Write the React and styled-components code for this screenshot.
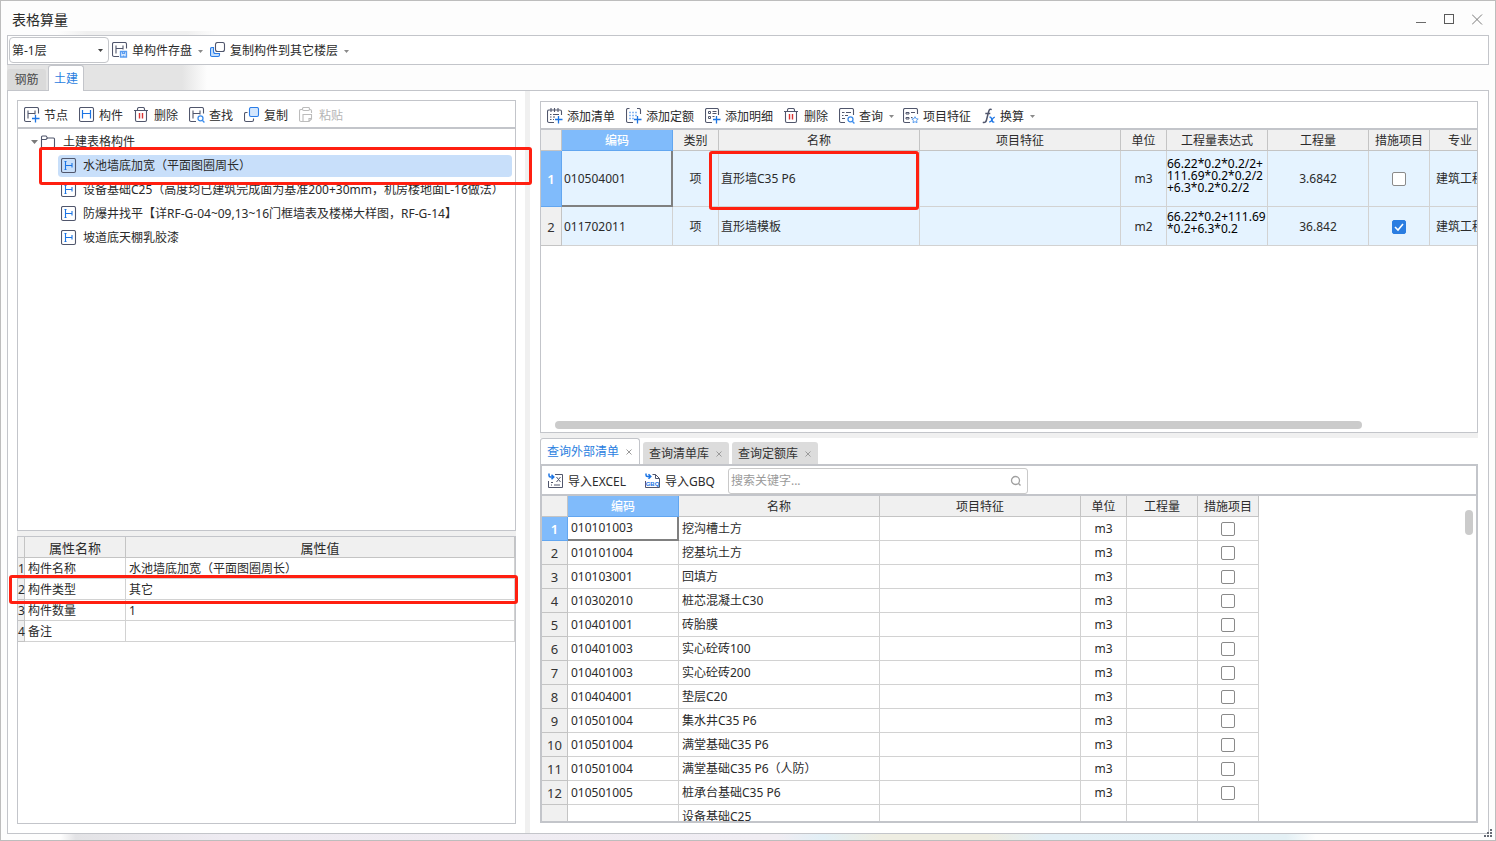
import React from "react";
import styled, { createGlobalStyle, css } from "styled-components";

const line = "#c3c5ca";
const cellLine = "#d2d2d2";
const headLine = "#c4c4c4";
const ink = "#50566c";
const blue = "#1b74e4";

const Global = createGlobalStyle`
  *, *::before, *::after { box-sizing: border-box; }
  body { margin: 0; }
  body, button, input, select, table {
    font-family: "Noto Sans", "Noto Sans CJK SC", sans-serif;
    font-size: 12px;
    line-height: 16px;
    color: #2b2b2b;
  }
  button, input, select { margin: 0; }
`;

/* ---------- window frame ---------- */

const Window = styled.div`
  height: 100vh;
  min-height: 600px;
  display: flex;
  flex-direction: column;
  padding: 0 6px 6px;
  border: 1px solid #bdbdbd;
  overflow: hidden;
  position: relative;
  background:
    linear-gradient(90deg, #fdfdfd 4%, #e3e3e6 5%, #eeebf2 15%, #f0edf3 52%, #e2eff6 55%, #eeede2 59%, #eeede2 66%, #e2eff6 70%, #e4f0f5 86%, #fdfdfd 88%) bottom / 100% 6px no-repeat,
    #fdfdfd;
`;

const TitleBar = styled.header`
  flex: 0 0 34px;
  display: flex;
  justify-content: space-between;
  align-items: center;
  padding: 4px 1px 0 5px;
  background: linear-gradient(90deg, transparent 50px, #f0f0f0 80px, #f0f0f0 180px, transparent 210px) bottom / 100% 4px no-repeat;
`;

const Title = styled.h1`
  margin: 0;
  font-size: 14px;
  line-height: 20px;
  font-weight: 400;
`;

const WindowButtons = styled.div`
  display: flex;
  gap: 12px;
`;

const WindowButton = styled.button`
  width: 16px;
  height: 16px;
  padding: 0;
  border: 0;
  background: none;
  svg { display: block; }
`;

const Bar = styled.div`
  display: flex;
  align-items: center;
  background: #fff;
`;

const MainBar = styled(Bar)`
  flex: 0 0 30px;
  gap: 9px;
  padding: 1px;
  border: 1px solid ${line};
`;

const SelectWrap = styled.label`
  position: relative;
  width: 100px;
  margin-right: -6px;
  svg { position: absolute; right: 6px; top: 12px; }
`;

const FloorSelect = styled.select`
  display: block;
  width: 100%;
  height: 26px;
  padding: 2px 2px 0;
  appearance: none;
  border: 1px solid #c4c6ca;
  border-radius: 4px;
  background: #fff;
`;

const ToolButton = styled.button`
  display: flex;
  align-items: center;
  gap: 4px;
  padding: 0;
  border: 0;
  background: none;
  white-space: nowrap;
  color: ${(p) => (p.disabled ? "#b5b5b5" : "#2b2b2b")};
  svg { flex: none; display: block; }
`;

const ToolLabel = styled.span`
  padding-top: 2px;
`;

const CaretSlot = styled.span`
  margin: 2px -2px 0 2px;
`;

const TabStrip = styled.div`
  flex: 0 0 26px;
  display: flex;
  align-items: flex-end;
  gap: 2px;
  margin-bottom: -1px;
  z-index: 1;
  background: linear-gradient(90deg, #e4e4e4 175px, transparent 200px) left top / 100% 25px no-repeat;
`;

const MainTab = styled.button`
  height: ${(p) => (p.$active ? 26 : 21)}px;
  margin-bottom: ${(p) => (p.$active ? 0 : 1)}px;
  width: ${(p) => (p.$active ? 36 : 39)}px;
  padding: 0;
  border: 1px solid ${(p) => (p.$active ? line : "#dadada")};
  border-bottom: 0;
  border-radius: 3px 3px 0 0;
  background: ${(p) => (p.$active ? "#fff" : "#dadada")};
  color: ${(p) => (p.$active ? "#2a80e0" : "#4a4a4a")};
`;

const Workspace = styled.main`
  flex: 1 1 0;
  min-height: 0;
  display: grid;
  grid-template-columns: minmax(0, 517fr) 5px minmax(0, 958fr);
  border: 1px solid ${line};
  background: #fff;
`;

const Splitter = styled.div`
  background: #f0f0f0;
`;

const LeftPane = styled.section`
  min-height: 0;
  display: grid;
  grid-template-columns: minmax(0, 1fr);
  grid-template-rows: minmax(0, 431fr) 5px minmax(0, 288fr);
  padding: 9px;
`;

const RightPane = styled.section`
  min-height: 0;
  display: grid;
  grid-template-columns: minmax(0, 1fr);
  grid-template-rows: minmax(0, 332fr) 5px minmax(0, 385fr);
  padding: 10px;
`;

const Panel = styled.div`
  min-height: 0;
  display: flex;
  flex-direction: column;
  border: 1px solid ${line};
  position: relative;
`;

const PanelBar = styled(Bar)`
  flex: 0 0 28px;
  gap: 11px;
  padding: 1px 6px 0;
  border-bottom: 2px solid ${line};
`;

const Callout = styled.span`
  position: absolute;
  z-index: 3;
  border: 3px solid #ff1f10;
  border-radius: 3px;
  pointer-events: none;
  inset: ${(p) => p.$inset};
`;

/* ---------- tree ---------- */

const Tree = styled.ul`
  list-style: none;
  margin: 0;
  padding: 1px 0 0;
`;

const TreeRoot = styled.li`
  display: flex;
  align-items: center;
  height: 24px;
  padding-left: 12px;
  svg { flex: none; }
  span { margin-left: 7px; }
`;

const TreeItem = styled.li`
  position: relative;
  display: flex;
  align-items: center;
  gap: 6px;
  height: 24px;
  margin: 0 3px 0 40px;
  padding-left: 3px;
  white-space: nowrap;
  border: solid transparent;
  border-width: 1px 0;
  border-radius: 4px;
  background-clip: padding-box;
  background-color: ${(p) => (p.$selected ? "#c8dffa" : "transparent")};
  svg { flex: none; }
`;

/* ---------- grids ---------- */

const Grid = styled.table`
  table-layout: fixed;
  width: ${(p) => p.$width};
  border-collapse: separate;
  border-spacing: 0;
`;

const Th = styled.th`
  height: 21px;
  padding: 2px 0 0;
  font-size: ${(p) => (p.$large ? 13 : 12)}px;
  font-weight: 400;
  white-space: nowrap;
  background: #f0f0f0;
  border: solid ${headLine};
  border-width: 0 1px 1px 0;
  ${(p) => p.$active && css`
    color: #fff;
    background: #80bbfb;
    border-color: #62a6f0;
    font-weight: 500;
  `}
`;

const RowNo = styled.th`
  padding: 1px 0 0;
  font-size: 13px;
  font-weight: ${(p) => (p.$active ? 600 : 400)};
  color: ${(p) => (p.$active ? "#fff" : "#333")};
  background: ${(p) => (p.$active ? "#80bbfb" : "#f0f0f0")};
  border: solid ${(p) => (p.$active ? "#62a6f0" : headLine)};
  border-width: 0 1px 1px 0;
`;

const Td = styled.td`
  padding: ${(p) => (p.$center ? "0" : "0 3px")};
  height: ${(p) => p.$h || 24}px;
  overflow: hidden;
  white-space: nowrap;
  text-align: ${(p) => (p.$center ? "center" : "left")};
  border: solid ${cellLine};
  border-width: 0 1px 1px 0;
  background: #fff;
  ${(p) => p.$current && css`
    border-width: 0 2px 2px 0;
    border-color: #808080;
  `}
`;

const BillTd = styled(Td)`
  padding: 1px 2px 0;
  background: #e5f3ff;
`;

const NameTd = styled(BillTd)`
  position: relative;
  overflow: visible;
`;

const PropTd = styled(Td)`
  padding: 2px 3px 0;
`;

const Formula = styled.div`
  margin: -7px 0 0 -2px;
  line-height: 12px;
  white-space: pre;
  color: #000;
`;

const Check = styled.input`
  appearance: none;
  display: block;
  width: 14px;
  height: 14px;
  margin: 0 auto;
  border: 1px solid #8a8a8a;
  border-radius: 2px;
  background: #fff;
  &:checked {
    border-color: #2a7de1;
    background: #2a7de1;
  }
`;

const CheckSlot = styled.span`
  display: block;
  position: relative;
  width: 14px;
  height: 14px;
  margin: 0 auto;
  svg { position: absolute; left: 0; top: 0; pointer-events: none; }
`;

const GridView = styled.div`
  flex: 1 1 0;
  min-height: 0;
  overflow: hidden;
  position: relative;
`;

const HThumb = styled.div`
  position: absolute;
  left: 14px;
  right: 115px;
  bottom: 3px;
  height: 8px;
  border-radius: 4px;
  background: #cbcbcb;
`;

const VThumb = styled.div`
  position: absolute;
  right: 3px;
  top: 14px;
  width: 8px;
  height: 25px;
  border-radius: 4px;
  background: #cbcbcb;
`;

const PropRow = styled.tr`
  position: relative;
`;

const PropNo = styled.th`
  height: 21px;
  padding: 2px 0 0;
  font-weight: 400;
  text-align: left;
  background: #f0f0f0;
  border: solid ${headLine};
  border-width: 0 1px 1px 0;
`;

/* ---------- query panel ---------- */

const QueryPane = styled.div`
  min-height: 0;
  display: flex;
  flex-direction: column;
`;

const QueryTabs = styled.div`
  flex: 0 0 26px;
  display: flex;
  align-items: flex-end;
  gap: 3px;
`;

const QueryTab = styled.button`
  display: flex;
  align-items: center;
  gap: 6px;
  height: ${(p) => (p.$active ? 26 : 22)}px;
  padding: 1px 6px 0;
  border: solid ${line};
  border-width: ${(p) => (p.$active ? "1px 1px 0" : 0)};
  border-radius: 3px 3px 0 0;
  background: ${(p) => (p.$active ? "#fff" : "#dcdcdc")};
  color: ${(p) => (p.$active ? "#2a80e0" : "#333")};
`;

const QueryPanel = styled(Panel)`
  flex: 1 1 0;
  border-width: 2px;
`;

const QueryBar = styled(Bar)`
  flex: 0 0 30px;
  gap: 19px;
  padding: 1px 6px 0;
  border-bottom: 2px solid ${line};
`;

const Search = styled.label`
  position: relative;
  width: 300px;
  margin-left: -6px;
  svg { position: absolute; right: 6px; top: 7px; }
`;

const SearchInput = styled.input`
  display: block;
  width: 100%;
  height: 26px;
  padding: 0 24px 0 2px;
  border: 1px solid #c9c9c9;
  border-radius: 3px;
  &::placeholder { color: #9a9a9a; }
`;

const Grip = styled.svg`
  position: absolute;
  right: 2px;
  bottom: 2px;
`;

/* ---------- icons ---------- */

const Icon = ({ children, w = 16, h = 16 }) => (
  <svg width={w} height={h} viewBox={`0 0 ${w} ${h}`} fill="none" stroke={ink} strokeWidth="1.1" aria-hidden="true">
    {children}
  </svg>
);

const Caret = ({ color = "#8a8a8a" }) => (
  <svg width="5" height="3" viewBox="0 0 5 3" aria-hidden="true">
    <path d="M0 0h5L2.5 3z" fill={color} />
  </svg>
);

const OpenFrame = () => (
  <>
    <path d="M14.500 6.500V2Q14.500 .5 13 .5H2Q.5 .5 .5 2V13Q.5 14.500 2 14.500H7" />
    <path d="M4 3.500V11.500M4 6.500h7M11 3.500v4" />
  </>
);

const Plus = () => <path d="M11.500 8v7.500M8 11.500h7.500" stroke={blue} strokeWidth="1.300" />;
const Lens = () => (
  <g stroke="#3b8cec" strokeWidth="1.300">
    <circle cx="11.500" cy="11.300" r="2.500" />
    <path d="M13.300 13.200l2.100 2.300" />
  </g>
);

const NodeIcon = () => <Icon><OpenFrame /><Plus /></Icon>;
const FindIcon = () => <Icon><OpenFrame /><Lens /></Icon>;
const SaveIcon = () => (
  <Icon>
    <OpenFrame />
    <path d="M8.500 9.500h6v5.500h-6z" stroke="#5a9df0" fill="#d5e7fd" strokeWidth="1.300" />
    <path d="M10.500 9.500v2h2v-2M11.500 13.500v1.500" stroke="#5a9df0" />
  </Icon>
);
const PartIcon = () => (
  <Icon>
    <rect x=".5" y=".5" width="14" height="14" rx="1.500" />
    <path d="M3.500 3v8.500M3.500 6.500h8M11.500 3v8.500" stroke={blue} strokeWidth="1.200" />
  </Icon>
);
const TrashIcon = () => (
  <Icon>
    <path d="M0 3.500h14M3.500 3.500V2Q3.500 .5 5 .5h4q1.500 0 1.500 1.500v1.500M1.500 3.500V13q0 1.500 1.500 1.500h8q1.500 0 1.500-1.500V3.500" />
    <path d="M5.500 6v5.500M8.500 6v5.500" stroke="#d93535" strokeWidth="1.400" />
  </Icon>
);
const CopyIcon = () => (
  <Icon>
    <rect x="5.500" y=".5" width="9" height="9" rx="1.500" stroke="#2a7de8" fill="#d3e6fd" />
    <path d="M3.500 5.500H2Q.5 5.500 .5 7V13Q.5 14.500 2 14.500H8Q9.500 14.500 9.500 13V11.500" />
  </Icon>
);
const CopyToIcon = () => (
  <Icon>
    <path d="M3.500 5.500H2Q.5 5.500 .5 7V13Q.5 14.500 2 14.500H8Q9.500 14.500 9.500 13V11.500H5.500Q3.500 11.500 3.500 9.500z" stroke="#2a7de8" fill="#c5dffc" />
    <rect x="5.500" y=".5" width="9" height="9" rx="2" fill="#fff" />
  </Icon>
);
const PasteIcon = () => (
  <Icon>
    <g stroke="#bcbcbc">
      <path d="M3.500 2.500H2Q.5 2.500 .5 4V13Q.5 14.500 2 14.500H4M10.500 2.500H11Q12.500 2.500 12.500 4V6" />
      <rect x="3.500" y=".5" width="7" height="3" rx="1.200" />
      <path d="M4 7.500h8.500V12L10 14.500H4zM12.500 11.500H10v3" />
    </g>
  </Icon>
);
const FolderIcon = () => (
  <Icon><path d="M1.500 13.500V3Q1.500 2 2.500 2H6l1.500 2H13.500q1 0 1 1v7.500q0 1-1 1zM1.500 5.500H6L7.500 4" /></Icon>
);
const ItemIcon = () => (
  <Icon>
    <rect x=".5" y=".5" width="14" height="14" rx="1.500" />
    <path d="M4.500 3v8.500M4.500 7.500h6.500M11 5v4.500M3.500 3.500h2M3.500 11.500h2" stroke={blue} />
  </Icon>
);
const ListAddIcon = () => (
  <Icon>
    <path d="M14.500 7V3.500Q14.500 2 13 2H2Q.5 2 .5 3.500V13Q.5 14.500 2 14.500H7M4 0v4M7.500 0v4M11 0v4" />
    <path d="M3 6.500h1.500M6 6.500h6M3 9h1.500M6 9h2M3 11.500h1.500M6 11.500h1" strokeWidth="1" />
    <Plus />
  </Icon>
);
const QuotaAddIcon = () => (
  <Icon>
    <path d="M3.500 .5H2Q.5 .5 .5 2V13Q.5 14.500 2 14.500H7M11 .5H13Q14.500 .5 14.500 2V6" />
    <path d="M3.500 4.500h1M6.500 4.500h1M9.500 4.500h1M3.500 7.500h1M6.500 7.500h1M9.500 7.500h1M3.500 10.500h1M6.500 10.500h1" stroke={blue} strokeWidth="1.300" />
    <Plus />
  </Icon>
);
const DetailAddIcon = () => (
  <Icon>
    <path d="M13.500 7V2Q13.500 .5 12 .5H2Q.5 .5 .5 2V13Q.5 14.500 2 14.500H7" />
    <path d="M3.500 3.500h2v2h-2zM3.500 8.500h2v2h-2zM7.500 3.500h4M7.500 5.500h4M7.500 8.500h2" strokeWidth="1" />
    <Plus />
  </Icon>
);
const QueryIcon = () => (
  <Icon>
    <path d="M14.500 7V2Q14.500 .5 13 .5H2Q.5 .5 .5 2V13Q.5 14.500 2 14.500H6" />
    <path d="M3 4.500h2.500M7 4.500h5M3 7.500h1.500M6 7.500h3M3 10.500h3" strokeWidth="1" />
    <Lens />
  </Icon>
);
const FeatureIcon = () => (
  <Icon>
    <path d="M14.500 6V2Q14.500 .5 13 .5H2Q.5 .5 .5 2V13Q.5 14.500 2 14.500H7" />
    <path d="M3 4.500h3v1.500H3zM3 9.500h3v1.500H3zM8 4.500h4M8 9.500h1.500" strokeWidth="1" />
    <path d="M12 8.700l1 2 2.200.3-1.600 1.500.4 2.200-2-1-2 1 .4-2.200-1.600-1.500 2.200-.3z" stroke="#5b9ef0" strokeWidth="1" />
  </Icon>
);
const FxIcon = () => (
  <Icon w={14}>
    <path d="M9.700 1.600Q7.600 .2 6.600 3.700L4.500 12Q3.700 15.300 .8 14.300M3.300 5.500h5" strokeWidth="1.500" />
    <path d="M7.500 9.400q1.500-.8 2 1.200l.8 2.400q.6 1.800 2 .8M12.800 9.500q-1.300-.6-2.600 2t-3 2.300" stroke={blue} strokeWidth="1.400" />
  </Icon>
);
const ExcelIcon = () => (
  <Icon>
    <path d="M.5 8V14.500H14.500V1.500H7M3 12h1M6 12h6M8.500 4l4 5M12.500 4l-4 5M3 9.500h2" strokeWidth="1" />
    <path d="M1 .5V2.500Q1 4 2.500 4H5.500M3.500 1.700L5.800 4 3.500 6.300" stroke={blue} strokeWidth="1.500" />
  </Icon>
);
const GbqIcon = () => (
  <Icon>
    <path d="M.5 8V14.500H14.500V5.500L10.500 1.500H7.500M10.500 1.500v4h4" strokeWidth="1" />
    <path d="M1 .5V2Q1 3.500 2.500 3.500H5.500M3.500 1.200L5.800 3.500 3.500 5.800" stroke={blue} strokeWidth="1.500" />
    <text x="7.500" y="12.500" textAnchor="middle" fontSize="6" fontWeight="700" fontFamily="Liberation Sans, sans-serif" fill={blue} stroke="none">GBQ</text>
  </Icon>
);
const CloseMark = () => (
  <svg width="8" height="8" viewBox="0 0 8 8" stroke="#9a9a9a" aria-hidden="true"><path d="M1.500 1.500l5 5M6.500 1.500l-5 5" /></svg>
);

/* ---------- data ---------- */

const treeItems = [
  "水池墙底加宽（平面图圈周长）",
  "设备基础C25（高度均已建筑完成面为基准200+30mm，机房楼地面L-16做法）",
  "防爆井找平【详RF-G-04~09,13~16门框墙表及楼梯大样图，RF-G-14】",
  "坡道底天棚乳胶漆",
];

const props = [
  ["构件名称", "水池墙底加宽（平面图圈周长）"],
  ["构件类型", "其它"],
  ["构件数量", "1"],
  ["备注", ""],
];

const bills = [
  { code: "010504001", name: "直形墙C35 P6", unit: "m3", formula: "66.22*0.2*0.2/2+\n111.69*0.2*0.2/2\n+6.3*0.2*0.2/2", qty: "3.6842", measure: false, h: 56 },
  { code: "011702011", name: "直形墙模板", unit: "m2", formula: "66.22*0.2+111.69\n*0.2+6.3*0.2", qty: "36.842", measure: true, h: 39 },
];

const library = [
  ["010101003", "挖沟槽土方"],
  ["010101004", "挖基坑土方"],
  ["010103001", "回填方"],
  ["010302010", "桩芯混凝土C30"],
  ["010401001", "砖胎膜"],
  ["010401003", "实心砼砖100"],
  ["010401003", "实心砼砖200"],
  ["010404001", "垫层C20"],
  ["010501004", "集水井C35 P6"],
  ["010501004", "满堂基础C35 P6"],
  ["010501004", "满堂基础C35 P6（人防）"],
  ["010501005", "桩承台基础C35 P6"],
];

const Cols = ({ widths }) => (
  <colgroup>{widths.map((w, i) => <col key={i} width={w || undefined} />)}</colgroup>
);

const Tool = ({ icon, label, caret, disabled }) => (
  <ToolButton type="button" disabled={disabled}>
    {icon}
    <ToolLabel>{label}</ToolLabel>
    {caret && <CaretSlot><Caret /></CaretSlot>}
  </ToolButton>
);

const MeasureCheck = ({ label, checked }) => (
  <CheckSlot>
    <Check type="checkbox" aria-label={label} defaultChecked={checked} />
    {checked && (
      <svg width="14" height="14" viewBox="0 0 14 14" fill="none" stroke="#fff" strokeWidth="1.600" aria-hidden="true">
        <path d="M3 7l3 3 5-6" />
      </svg>
    )}
  </CheckSlot>
);

export default function App() {
  return (
    <>
      <Global />
      <Window>
        <TitleBar>
          <Title>表格算量</Title>
          <WindowButtons>
            <WindowButton type="button" aria-label="最小化">
              <svg width="16" height="16" stroke="#6a6a6a"><path d="M0 10.500h10" /></svg>
            </WindowButton>
            <WindowButton type="button" aria-label="最大化">
              <svg width="16" height="16" fill="none" stroke="#5a5a5a"><rect x=".5" y="2.500" width="9" height="9" /></svg>
            </WindowButton>
            <WindowButton type="button" aria-label="关闭">
              <svg width="16" height="16" stroke="#7a7a7a"><path d="M0 2.500l10 10M10 2.500l-10 10" /></svg>
            </WindowButton>
          </WindowButtons>
        </TitleBar>

        <MainBar role="toolbar">
          <SelectWrap>
            <FloorSelect aria-label="楼层" defaultValue="-1">
              <option value="-1">第-1层</option>
            </FloorSelect>
            <Caret color="#444" />
          </SelectWrap>
          <Tool icon={<SaveIcon />} label="单构件存盘" caret />
          <Tool icon={<CopyToIcon />} label="复制构件到其它楼层" caret />
        </MainBar>

        <TabStrip>
          <MainTab type="button">钢筋</MainTab>
          <MainTab type="button" $active>土建</MainTab>
        </TabStrip>

        <Workspace>
          <LeftPane>
            <Panel>
              <PanelBar role="toolbar">
                <Tool icon={<NodeIcon />} label="节点" />
                <Tool icon={<PartIcon />} label="构件" />
                <Tool icon={<TrashIcon />} label="删除" />
                <Tool icon={<FindIcon />} label="查找" />
                <Tool icon={<CopyIcon />} label="复制" />
                <Tool icon={<PasteIcon />} label="粘贴" disabled />
              </PanelBar>
              <Tree>
                <TreeRoot>
                  <svg width="10" height="6" viewBox="0 0 10 6" aria-hidden="true"><path d="M1 1h7L4.500 5z" fill="#7a7a7a" /></svg>
                  <FolderIcon />
                  <span>土建表格构件</span>
                </TreeRoot>
                {treeItems.map((t, i) => (
                  <TreeItem key={t} $selected={i === 0}>
                    <ItemIcon />
                    <span>{t}</span>
                    {i === 0 && <Callout $inset="-8px -20px -8px -19px" />}
                  </TreeItem>
                ))}
              </Tree>
            </Panel>
            <Splitter />
            <Panel>
              <Grid $width="100%">
                <Cols widths={[7, 101, 0]} />
                <thead>
                  <tr><Th $large /><Th $large>属性名称</Th><Th $large>属性值</Th></tr>
                </thead>
                <tbody>
                  {props.map(([k, v], i) => (
                    <PropRow key={k}>
                      <PropNo scope="row">{i + 1}{i === 1 && <Callout $inset="-4px -3px -4px -9px" />}</PropNo>
                      <PropTd $h={21}>{k}</PropTd>
                      <PropTd $h={21}>{v}</PropTd>
                    </PropRow>
                  ))}
                </tbody>
              </Grid>
            </Panel>
          </LeftPane>

          <Splitter />

          <RightPane>
            <Panel>
              <PanelBar role="toolbar">
                <Tool icon={<ListAddIcon />} label="添加清单" />
                <Tool icon={<QuotaAddIcon />} label="添加定额" />
                <Tool icon={<DetailAddIcon />} label="添加明细" />
                <Tool icon={<TrashIcon />} label="删除" />
                <Tool icon={<QueryIcon />} label="查询" caret />
                <Tool icon={<FeatureIcon />} label="项目特征" />
                <Tool icon={<FxIcon />} label="换算" caret />
              </PanelBar>
              <GridView>
                <Grid $width="950px">
                  <Cols widths={[21, 111, 46, 201, 201, 46, 101, 101, 61, 61]} />
                  <thead>
                    <tr>
                      <Th /><Th $active>编码</Th><Th>类别</Th><Th>名称</Th><Th>项目特征</Th>
                      <Th>单位</Th><Th>工程量表达式</Th><Th>工程量</Th><Th>措施项目</Th><Th>专业</Th>
                    </tr>
                  </thead>
                  <tbody>
                    {bills.map((b, i) => (
                      <tr key={b.code}>
                        <RowNo scope="row" $active={i === 0}>{i + 1}</RowNo>
                        <BillTd $h={b.h} $current={i === 0}>{b.code}</BillTd>
                        <BillTd $center>项</BillTd>
                        <NameTd>
                          {b.name}
                          {i === 0 && <Callout $inset="0 0 -4px -10px" />}
                        </NameTd>
                        <BillTd />
                        <BillTd $center>{b.unit}</BillTd>
                        <BillTd><Formula>{b.formula}</Formula></BillTd>
                        <BillTd $center>{b.qty}</BillTd>
                        <BillTd $center><MeasureCheck label={`${b.code} 措施项目`} checked={b.measure} /></BillTd>
                        <BillTd $center>建筑工程</BillTd>
                      </tr>
                    ))}
                  </tbody>
                </Grid>
                <HThumb />
              </GridView>
            </Panel>
            <Splitter />
            <QueryPane>
              <QueryTabs>
                <QueryTab type="button" $active>查询外部清单<CloseMark /></QueryTab>
                <QueryTab type="button">查询清单库<CloseMark /></QueryTab>
                <QueryTab type="button">查询定额库<CloseMark /></QueryTab>
              </QueryTabs>
              <QueryPanel>
                <QueryBar role="toolbar">
                  <Tool icon={<ExcelIcon />} label="导入EXCEL" />
                  <Tool icon={<GbqIcon />} label="导入GBQ" />
                  <Search>
                    <SearchInput type="text" aria-label="搜索" placeholder="搜索关键字..." />
                    <svg width="12" height="12" fill="none" stroke="#a0a0a0" strokeWidth="1.300" aria-hidden="true">
                      <circle cx="5.500" cy="5.500" r="4" /><path d="M8.300 8.300L10.500 10.500" />
                    </svg>
                  </Search>
                </QueryBar>
                <GridView>
                  <Grid $width="717px">
                    <Cols widths={[26, 111, 201, 201, 46, 71, 61]} />
                    <thead>
                      <tr>
                        <Th /><Th $active>编码</Th><Th>名称</Th><Th>项目特征</Th><Th>单位</Th><Th>工程量</Th><Th>措施项目</Th>
                      </tr>
                    </thead>
                    <tbody>
                      {library.map(([code, name], i) => (
                        <tr key={i}>
                          <RowNo scope="row" $active={i === 0}>{i + 1}</RowNo>
                          <Td $current={i === 0}>{code}</Td>
                          <Td>{name}</Td>
                          <Td />
                          <Td $center>m3</Td>
                          <Td />
                          <Td $center><MeasureCheck label={`${name} 措施项目`} /></Td>
                        </tr>
                      ))}
                      <tr>
                        <RowNo /><Td /><Td>设备基础C25</Td><Td /><Td /><Td /><Td />
                      </tr>
                    </tbody>
                  </Grid>
                  <VThumb />
                </GridView>
              </QueryPanel>
            </QueryPane>
          </RightPane>
        </Workspace>
        <Grip width="9" height="9" fill="#666b75" aria-hidden="true">
          <path d="M6 0h2v2H6zM3 3h2v2H3zM6 3h2v2H6zM0 6h2v2H0zM3 6h2v2H3zM6 6h2v2H6z" />
        </Grip>
      </Window>
    </>
  );
}
